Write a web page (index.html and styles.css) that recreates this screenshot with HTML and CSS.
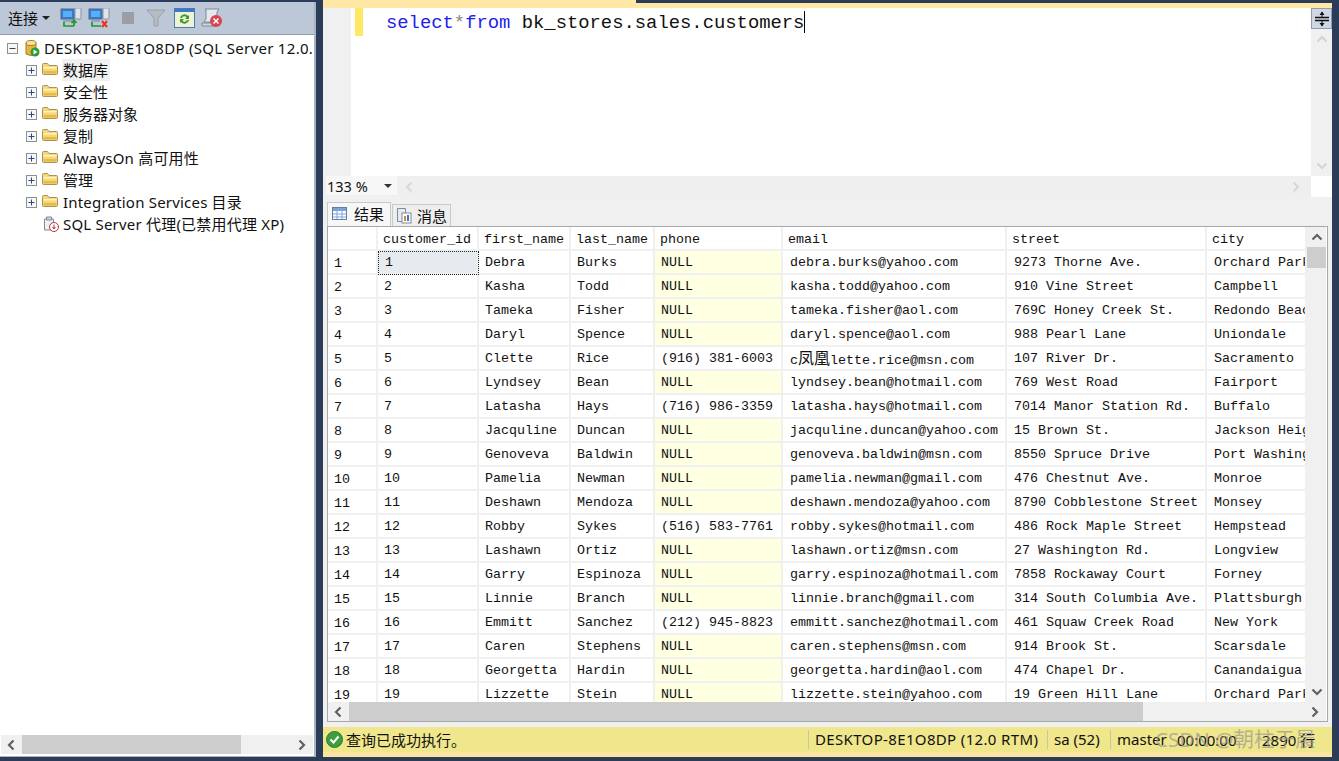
FILE: index.html
```html
<!DOCTYPE html>
<html lang="zh">
<head>
<meta charset="utf-8">
<title>SSMS</title>
<link rel="stylesheet" href="styles.css">
</head>
<body>
<svg class="defs" width="0" height="0">
  <symbol id="left" viewBox="0 0 10 12"><path d="M7.5 1.5 3 6l4.500 4.500" fill="none" stroke="currentColor" stroke-width="2.200"/></symbol>
  <symbol id="right" viewBox="0 0 10 12"><path d="M2.500 1.500 7 6l-4.500 4.500" fill="none" stroke="currentColor" stroke-width="2.200"/></symbol>
  <symbol id="up" viewBox="0 0 12 10"><path d="M1.500 7.500 6 3l4.500 4.500" fill="none" stroke="currentColor" stroke-width="2.200"/></symbol>
  <symbol id="down" viewBox="0 0 12 10"><path d="M1.500 2.500 6 7l4.500-4.500" fill="none" stroke="currentColor" stroke-width="2.200"/></symbol>
  <symbol id="plus" viewBox="0 0 11 11"><rect x=".5" y=".5" width="10" height="10" fill="#f7f7f7" stroke="#8e8f8f"/><path d="M2.500 5.500h6M5.500 2.500v6" stroke="#2b4a7a"/></symbol>
  <symbol id="minus" viewBox="0 0 11 11"><rect x=".5" y=".5" width="10" height="10" fill="#f7f7f7" stroke="#8e8f8f"/><path d="M2.500 5.500h6" stroke="#444"/></symbol>
  <symbol id="folder" viewBox="0 0 16 12"><path d="M.5 2.500V1.500q0-1 1-1h4l1.500 2h7.500q1 0 1 1v7q0 1-1 1h-13q-1 0-1-1z" fill="#f6d777" stroke="#a8935a"/><path d="M1.500 4h13v1.500h-13z" fill="#fff3c4"/><path d="M1.500 8h13v2.500h-13z" fill="#e8b948"/></symbol>
  <symbol id="computer" viewBox="0 0 22 20"><rect x="15" y="0" width="6" height="11" rx="1" fill="#dfe4ea" stroke="#8a94a3"/><rect x="1" y="1" width="13" height="10" fill="#2f7be0" stroke="#5d6878"/><rect x="3" y="3" width="9" height="6" fill="#58b0f4"/><rect x="3" y="12" width="9" height="2" fill="#9aa5b3"/></symbol>
</svg>

<aside class="explorer">
  <div class="toolbar">
    <span class="connect">连接</span><span class="caret"></span>
    <svg class="tool first" width="22" height="20" viewBox="0 0 22 20"><use href="#computer"/><path d="M4 14v4h10M14 18v-5M11.500 15l2.500-3 2.500 3" fill="none" stroke="#1d9a2c" stroke-width="1.700"/></svg>
    <svg class="tool" width="22" height="20" viewBox="0 0 22 20"><use href="#computer"/><path d="M4 14v4h9" fill="none" stroke="#1d9a2c" stroke-width="1.700"/><path d="M14 13l5 6M19 13l-5 6" stroke="#e8321e" stroke-width="2"/></svg>
    <svg class="tool stop" width="12" height="12" viewBox="0 0 12 12"><rect width="12" height="12" fill="#9b9fa5"/></svg>
    <svg class="tool filter" width="20" height="18" viewBox="0 0 20 18"><path d="M1 1h18l-7 8v8H8V9z" fill="#b6bcc4" stroke="#9a9fa7"/></svg>
    <svg class="tool" width="21" height="20" viewBox="0 0 21 20"><rect x=".5" y=".5" width="20" height="19" fill="#eef3d6" stroke="#4a79b5"/><rect x="1" y="1" width="19" height="3" fill="#3d78c8"/><path d="M6 10a4.500 4.500 0 0 1 8-2l1-1v4h-4l1.500-1.500a2.500 2.500 0 0 0-4.500.5zM15 12a4.500 4.500 0 0 1-8 2l-1 1v-4h4l-1.500 1.500a2.500 2.500 0 0 0 4.500-.5z" fill="#3d9a2d"/></svg>
    <svg class="tool" width="22" height="20" viewBox="0 0 22 20"><path d="M4 1h14l-2 3v10H3l2-3V2z" fill="#e4e9ef" stroke="#7f8a99"/><path d="M1 15h14v3H1z" fill="#cfd6df" stroke="#7f8a99"/><circle cx="15" cy="13" r="6" fill="#d8454e"/><path d="M12.500 10.500l5 5M17.500 10.500l-5 5" stroke="#fff" stroke-width="1.500"/></svg>
  </div>
  <div class="tree">
    <div class="node root">
      <svg class="exp-root" width="11" height="11"><use href="#minus"/></svg>
      <svg class="server" width="15" height="17" viewBox="0 0 15 17"><path d="M1 3v11q5 3 10 0V3z" fill="#e9b53f" stroke="#a57f25"/><ellipse cx="6" cy="3" rx="5" ry="2.500" fill="#f7e3a0" stroke="#a57f25"/><circle cx="10" cy="12" r="4.500" fill="#2c9c38"/><path d="M8.500 9.500v5l4-2.500z" fill="#fff"/></svg>
      <span class="label root-label">DESKTOP-8E1O8DP (SQL Server 12.0.</span>
    </div>
    <div class="node"><svg class="exp" width="11" height="11"><use href="#plus"/></svg><svg class="folder" width="16" height="12"><use href="#folder"/></svg><span class="label selected">数据库</span></div>
    <div class="node"><svg class="exp" width="11" height="11"><use href="#plus"/></svg><svg class="folder" width="16" height="12"><use href="#folder"/></svg><span class="label">安全性</span></div>
    <div class="node"><svg class="exp" width="11" height="11"><use href="#plus"/></svg><svg class="folder" width="16" height="12"><use href="#folder"/></svg><span class="label">服务器对象</span></div>
    <div class="node"><svg class="exp" width="11" height="11"><use href="#plus"/></svg><svg class="folder" width="16" height="12"><use href="#folder"/></svg><span class="label">复制</span></div>
    <div class="node"><svg class="exp" width="11" height="11"><use href="#plus"/></svg><svg class="folder" width="16" height="12"><use href="#folder"/></svg><span class="label wide">AlwaysOn 高可用性</span></div>
    <div class="node"><svg class="exp" width="11" height="11"><use href="#plus"/></svg><svg class="folder" width="16" height="12"><use href="#folder"/></svg><span class="label">管理</span></div>
    <div class="node"><svg class="exp" width="11" height="11"><use href="#plus"/></svg><svg class="folder" width="16" height="12"><use href="#folder"/></svg><span class="label wide">Integration Services 目录</span></div>
    <div class="node leaf">
      <svg class="agent" width="16" height="16" viewBox="0 0 16 16"><path d="M1.500 3h9v11h-9z" fill="#eef0f3" stroke="#7f8a99"/><path d="M3.500 1h5v3h-5z" fill="#cfd6df" stroke="#7f8a99"/><circle cx="11" cy="11" r="4.500" fill="#fff" stroke="#b03a3a"/><path d="M11 8.500v3.500M9.500 11l1.500 2 1.500-2" fill="none" stroke="#b03a3a"/></svg>
      <span class="label wide">SQL Server 代理(已禁用代理 XP)</span>
    </div>
  </div>
  <div class="hscroll tree-scroll">
    <svg class="arrow" width="10" height="12"><use href="#left"/></svg>
    <div class="track"><div class="thumb tree-thumb"></div></div>
    <svg class="arrow" width="10" height="12"><use href="#right"/></svg>
  </div>
</aside>

<main class="workspace">
  <div class="doc-tabs"><div class="doc-tab"></div><div class="doc-rest"></div></div>
  <section class="editor">
    <div class="margin"></div>
    <div class="changebar"></div>
    <div class="code"><span class="kw">select</span><span class="op">*</span><span class="kw">from</span> bk_stores.sales.customers<span class="cursor"></span></div>
    <div class="edit-scroll">
      <div class="split"><svg width="18" height="18" viewBox="0 0 18 18"><path d="M9 2v5M9 11v5" stroke="#111"/><path d="M6.500 5 9 1.500 11.500 5zM6.500 13 9 16.500 11.500 13z" fill="#111"/><path d="M2 7.500h14M2 10.500h14" stroke="#111" stroke-width="1.500"/></svg></div>
      <div class="edit-up"><svg width="12" height="10"><use href="#up"/></svg></div>
      <div class="edit-fill"></div>
      <div class="edit-down"><svg width="12" height="10"><use href="#down"/></svg></div>
    </div>
  </section>
  <div class="zoombar">
    <div class="zoom-box"><span>133 %</span><span class="zoom-caret"></span></div>
    <svg class="faint first-arrow" width="10" height="12"><use href="#left"/></svg>
    <div class="zoom-fill"></div>
    <svg class="faint" width="10" height="12"><use href="#right"/></svg>
    <div class="corner"></div>
  </div>
  <div class="result-tabs">
    <div class="rtab active">
      <svg width="15" height="13" viewBox="0 0 15 13"><rect x=".5" y=".5" width="14" height="12" fill="#fff" stroke="#5a7fb0"/><rect x="1" y="1" width="13" height="3" fill="#7fa3d1"/><path d="M1 7h13M1 10h13M5 4v8M10 4v8" stroke="#7fa3d1"/></svg>
      <span>结果</span>
    </div>
    <div class="rtab">
      <svg width="16" height="17" viewBox="0 0 16 17"><path d="M1.500 1.500h8v13h-8z" fill="#e6ebf1" stroke="#7f8a99"/><rect x="6" y="6" width="9" height="10" fill="#fff" stroke="#7f8a99"/><path d="M8 9h2v5H8z" fill="#d88a2c"/><path d="M11 8h2v6h-2z" fill="#3a78c4"/></svg>
      <span>消息</span>
    </div>
  </div>
  <section class="grid-frame">
    <div class="grid-top">
      <div class="grid-view">
        <table class="data">
          <colgroup><col class="c0"><col class="c1"><col class="c2"><col class="c3"><col class="c4"><col class="c5"><col class="c6"><col class="c7"></colgroup>
          <thead><tr><th></th><th>customer_id</th><th>first_name</th><th>last_name</th><th>phone</th><th>email</th><th>street</th><th>city</th></tr></thead>
          <tbody>
<tr><td class="num">1</td><td class="active-cell">1</td><td>Debra</td><td>Burks</td><td class="null">NULL</td><td>debra.burks@yahoo.com</td><td>9273 Thorne Ave.</td><td>Orchard Park</td></tr>
<tr><td class="num">2</td><td>2</td><td>Kasha</td><td>Todd</td><td class="null">NULL</td><td>kasha.todd@yahoo.com</td><td>910 Vine Street</td><td>Campbell</td></tr>
<tr><td class="num">3</td><td>3</td><td>Tameka</td><td>Fisher</td><td class="null">NULL</td><td>tameka.fisher@aol.com</td><td>769C Honey Creek St.</td><td>Redondo Beach</td></tr>
<tr><td class="num">4</td><td>4</td><td>Daryl</td><td>Spence</td><td class="null">NULL</td><td>daryl.spence@aol.com</td><td>988 Pearl Lane</td><td>Uniondale</td></tr>
<tr><td class="num">5</td><td>5</td><td>Clette</td><td>Rice</td><td>(916) 381-6003</td><td>c<span class="cjk">凤凰</span>lette.rice@msn.com</td><td>107 River Dr.</td><td>Sacramento</td></tr>
<tr><td class="num">6</td><td>6</td><td>Lyndsey</td><td>Bean</td><td class="null">NULL</td><td>lyndsey.bean@hotmail.com</td><td>769 West Road</td><td>Fairport</td></tr>
<tr><td class="num">7</td><td>7</td><td>Latasha</td><td>Hays</td><td>(716) 986-3359</td><td>latasha.hays@hotmail.com</td><td>7014 Manor Station Rd.</td><td>Buffalo</td></tr>
<tr><td class="num">8</td><td>8</td><td>Jacquline</td><td>Duncan</td><td class="null">NULL</td><td>jacquline.duncan@yahoo.com</td><td>15 Brown St.</td><td>Jackson Heights</td></tr>
<tr><td class="num">9</td><td>9</td><td>Genoveva</td><td>Baldwin</td><td class="null">NULL</td><td>genoveva.baldwin@msn.com</td><td>8550 Spruce Drive</td><td>Port Washington</td></tr>
<tr><td class="num">10</td><td>10</td><td>Pamelia</td><td>Newman</td><td class="null">NULL</td><td>pamelia.newman@gmail.com</td><td>476 Chestnut Ave.</td><td>Monroe</td></tr>
<tr><td class="num">11</td><td>11</td><td>Deshawn</td><td>Mendoza</td><td class="null">NULL</td><td>deshawn.mendoza@yahoo.com</td><td>8790 Cobblestone Street</td><td>Monsey</td></tr>
<tr><td class="num">12</td><td>12</td><td>Robby</td><td>Sykes</td><td>(516) 583-7761</td><td>robby.sykes@hotmail.com</td><td>486 Rock Maple Street</td><td>Hempstead</td></tr>
<tr><td class="num">13</td><td>13</td><td>Lashawn</td><td>Ortiz</td><td class="null">NULL</td><td>lashawn.ortiz@msn.com</td><td>27 Washington Rd.</td><td>Longview</td></tr>
<tr><td class="num">14</td><td>14</td><td>Garry</td><td>Espinoza</td><td class="null">NULL</td><td>garry.espinoza@hotmail.com</td><td>7858 Rockaway Court</td><td>Forney</td></tr>
<tr><td class="num">15</td><td>15</td><td>Linnie</td><td>Branch</td><td class="null">NULL</td><td>linnie.branch@gmail.com</td><td>314 South Columbia Ave.</td><td>Plattsburgh</td></tr>
<tr><td class="num">16</td><td>16</td><td>Emmitt</td><td>Sanchez</td><td>(212) 945-8823</td><td>emmitt.sanchez@hotmail.com</td><td>461 Squaw Creek Road</td><td>New York</td></tr>
<tr><td class="num">17</td><td>17</td><td>Caren</td><td>Stephens</td><td class="null">NULL</td><td>caren.stephens@msn.com</td><td>914 Brook St.</td><td>Scarsdale</td></tr>
<tr><td class="num">18</td><td>18</td><td>Georgetta</td><td>Hardin</td><td class="null">NULL</td><td>georgetta.hardin@aol.com</td><td>474 Chapel Dr.</td><td>Canandaigua</td></tr>
<tr><td class="num">19</td><td>19</td><td>Lizzette</td><td>Stein</td><td class="null">NULL</td><td>lizzette.stein@yahoo.com</td><td>19 Green Hill Lane</td><td>Orchard Park</td></tr>
          </tbody>
        </table>
      </div>
      <div class="vscroll">
        <svg class="v-arrow" width="12" height="10"><use href="#up"/></svg>
        <div class="v-thumb"></div>
        <div class="v-fill"></div>
        <svg class="v-arrow" width="12" height="10"><use href="#down"/></svg>
      </div>
    </div>
    <div class="hscroll grid-scroll">
      <svg class="arrow" width="10" height="12"><use href="#left"/></svg>
      <div class="track"><div class="thumb grid-thumb"></div></div>
      <svg class="arrow" width="10" height="12"><use href="#right"/></svg>
    </div>
  </section>
  <footer class="status">
    <svg class="ok" width="17" height="17" viewBox="0 0 17 17"><circle cx="8.500" cy="8.500" r="8" fill="#3f9d3f" stroke="#2c7a30"/><path d="M4.500 8.500l3 3 5-6" fill="none" stroke="#fff" stroke-width="2"/></svg>
    <span class="msg">查询已成功执行。</span>
    <span class="cell s-server">DESKTOP-8E1O8DP (12.0 RTM)</span>
    <span class="cell s-user">sa (52)</span>
    <span class="cell s-db">master</span>
    <span class="s-time">00:00:00</span>
    <span class="s-rows">2890 行</span>
    <span class="watermark">CSDN @朝柱于晨</span>
  </footer>
</main>
</body>
</html>
```
FILE: styles.css
```css
* { box-sizing: border-box; }
html, body { margin: 0; height: 761px; overflow: hidden; }
body {
  display: flex;
  background: #2b3c59;
  font-family: "Noto Sans", "Noto Sans CJK SC", sans-serif;
  font-size: 15px;
  color: #111;
}
.defs { position: absolute; }

/* Object explorer */
.explorer {
  width: 316px;
  height: 755px;
  margin-top: 2px;
  display: flex;
  flex-direction: column;
  background: #fff;
  border-right: 2px solid #a9b3c2;
  border-bottom: 1px solid #a9b3c2;
}
.toolbar {
  height: 33px;
  flex: none;
  display: flex;
  align-items: center;
  padding-left: 8px;
  background: #bcc7d8;
  border-bottom: 1px solid #8f9aab;
}
.connect { font-size: 15px; line-height: 20px; }
.caret {
  margin: 0 0 0 4px;
  border-left: 4px solid transparent;
  border-right: 4px solid transparent;
  border-top: 4px solid #222;
}
.tool { margin-left: 6px; flex: none; }
.tool.first { margin-left: 10px; }
.tool.stop { margin-left: 12px; }
.tool.filter { margin-left: 12px; margin-right: 2px; }
.tree { flex: 1; padding-top: 2px; }
.node { height: 22px; display: flex; align-items: center; padding-left: 26px; white-space: nowrap; overflow: hidden; }
.root { padding-left: 7px; }
.exp-root { flex: none; }
.server { flex: none; margin-left: 7px; }
.exp { flex: none; }
.folder { flex: none; margin-left: 5px; margin-top: -2px; }
.label { margin-left: 4px; line-height: 22px; padding: 0 1px; }
.root-label { margin-left: 3px; letter-spacing: 0.3px; }
.wide { letter-spacing: 0.2px; }
.selected { background: #f0f0f0; padding-right: 2px; }
.leaf { padding-left: 43px; }
.agent { flex: none; }
.leaf .label { margin-left: 3px; }

/* Scrollbars */
.hscroll { display: flex; align-items: center; height: 19px; background: #f0f0f0; color: #606060; flex: none; }
.arrow { flex: none; margin: 0 6px 0 5px; }
.track { flex: 1; height: 100%; }
.thumb { height: 100%; background: #cdcdcd; }
.tree-scroll { margin: 0 1px 2px; }
.tree-thumb { width: 219px; }
.grid-thumb { width: 794px; }

/* Workspace */
.workspace { margin-left: 7px; width: 1009px; height: 757px; display: flex; flex-direction: column; background: #f0f0f0; }
.doc-tabs { height: 8px; flex: none; display: flex; align-items: flex-end; background: #2b3c59; }
.doc-tab { width: 313px; height: 8px; background: #ffe8a6; }
.doc-rest { flex: 1; height: 5px; background: #ffe8a6; }

.editor { height: 168px; flex: none; display: flex; background: #fff; }
.margin { width: 28px; background: #f0f0f0; }
.changebar { width: 8px; height: 28px; margin-left: 4px; background: #ffe866; }
.code {
  flex: 1;
  padding: 3px 0 0 23px;
  font-family: "Liberation Mono", "Noto Sans CJK SC", monospace;
  font-size: 18.850px;
  line-height: 24px;
  color: #111;
  white-space: nowrap;
}
.kw { color: #2222ee; }
.op { color: #888; }
.cursor { display: inline-block; width: 1px; height: 22px; background: #000; vertical-align: -5px; }
.edit-scroll { width: 21px; display: flex; flex-direction: column; background: #f0f0f0; }
.split { height: 21px; display: flex; align-items: center; justify-content: center; background: #cfd7e4; border: 1px solid #8f9db3; }
.edit-up, .edit-down { height: 20px; display: flex; align-items: center; justify-content: center; color: #d4d4d4; }
.edit-fill { flex: 1; }

.zoombar { height: 21px; flex: none; display: flex; align-items: center; background: #efefef; color: #d8d8d8; }
.zoom-box {
  width: 71px; height: 19px; margin: 0 0 2px 3px;
  padding-left: 1px;
  display: flex; align-items: center; justify-content: space-between;
  background: #f7f7f7;
  color: #111;
  font-size: 14.500px;
}
.zoom-caret { margin-right: 5px; border-left: 4px solid transparent; border-right: 4px solid transparent; border-top: 4px solid #333; }
.faint { flex: none; }
.first-arrow { margin-left: 7px; }
.zoom-fill { flex: 1; }
.corner { width: 21px; height: 100%; margin-left: 10px; background: #fff; }

.result-tabs { height: 29px; flex: none; display: flex; align-items: flex-end; gap: 1px; padding-left: 4px; background: #f0f0f0; }
.rtab { height: 22px; width: 59px; display: flex; align-items: center; gap: 5px; padding-left: 3px; background: #eeeeee; border: 1px solid #c9c9c9; border-bottom: 0; }
.rtab.active { height: 24px; width: 64px; padding: 0 0 3px 4px; gap: 7px; background: #f7f7f7; }

.grid-frame {
  width: 1001px; height: 496px; margin-left: 4px; flex: none;
  display: flex; flex-direction: column;
  background: #fff;
  border: 1px solid #a8a8a8;
  padding: 0 1px 0 0;
}
.grid-top { flex: 1; min-height: 0; display: flex; }
.grid-view { width: 979px; height: 475px; overflow: hidden; }
.data {
  table-layout: fixed;
  width: 979px;
  border-collapse: separate;
  border-spacing: 0;
  font-family: "Liberation Mono", "Noto Sans CJK SC", monospace;
  font-size: 13.330px;
  color: #111;
}
.c0 { width: 50px; }
.c1 { width: 101px; }
.c2 { width: 92px; }
.c3 { width: 84px; }
.c4 { width: 128px; }
.c5 { width: 224px; }
.c6 { width: 200px; }
.c7 { width: 100px; }
.data th, .data td {
  height: 24px;
  padding: 0 0 0 6px;
  overflow: hidden;
  white-space: nowrap;
  text-align: left;
  font-weight: normal;
  border-right: 2px solid #f0f0f0;
  border-bottom: 2px solid #f0f0f0;
}
.data th { padding: 2px 0 0 5px; }
.data td:nth-child(n+6) { padding-left: 7px; }
.data td.num { padding: 3px 0 0 6px; }
.data td.null { background: #ffffe1; padding-left: 6px; }
.data td.active-cell { background: #e6ebef; outline: 1px dotted #222; outline-offset: -1px; padding-left: 7px; }
.cjk { font-family: "Noto Sans CJK SC", sans-serif; font-size: 16px; line-height: 1; }
.vscroll { width: 19px; display: flex; flex-direction: column; align-items: center; background: #f0f0f0; color: #606060; }
.v-arrow { flex: none; margin: 5px 0; }
.v-thumb { width: 19px; height: 21px; flex: none; background: #cdcdcd; }
.v-fill { flex: 1; }
.grid-scroll { width: 998px; margin-right: 1px; }

.status {
  height: 30px;
  flex: none;
  position: relative;
  display: flex;
  align-items: center;
  padding-left: 3px;
  background: #f0e68c;
  border-bottom: 5px solid #fce4a0;
  font-size: 15px;
  margin-top: 5px;
}
.ok { flex: none; }
.msg { margin-left: 3px; width: 462px; }
.cell { border-left: 1px solid #c9c6a8; padding-left: 6px; line-height: 19px; white-space: nowrap; }
.s-server { width: 239px; letter-spacing: 0.35px; }
.s-user { width: 63px; }
.s-db { width: 67px; }
.s-time { width: 85px; white-space: nowrap; }
.s-rows { white-space: nowrap; }
.watermark {
  position: absolute;
  left: 832px;
  top: 0;
  font-size: 20.500px;
  line-height: 24px;
  white-space: nowrap;
  color: rgba(150, 150, 150, 0.7);
}
```
